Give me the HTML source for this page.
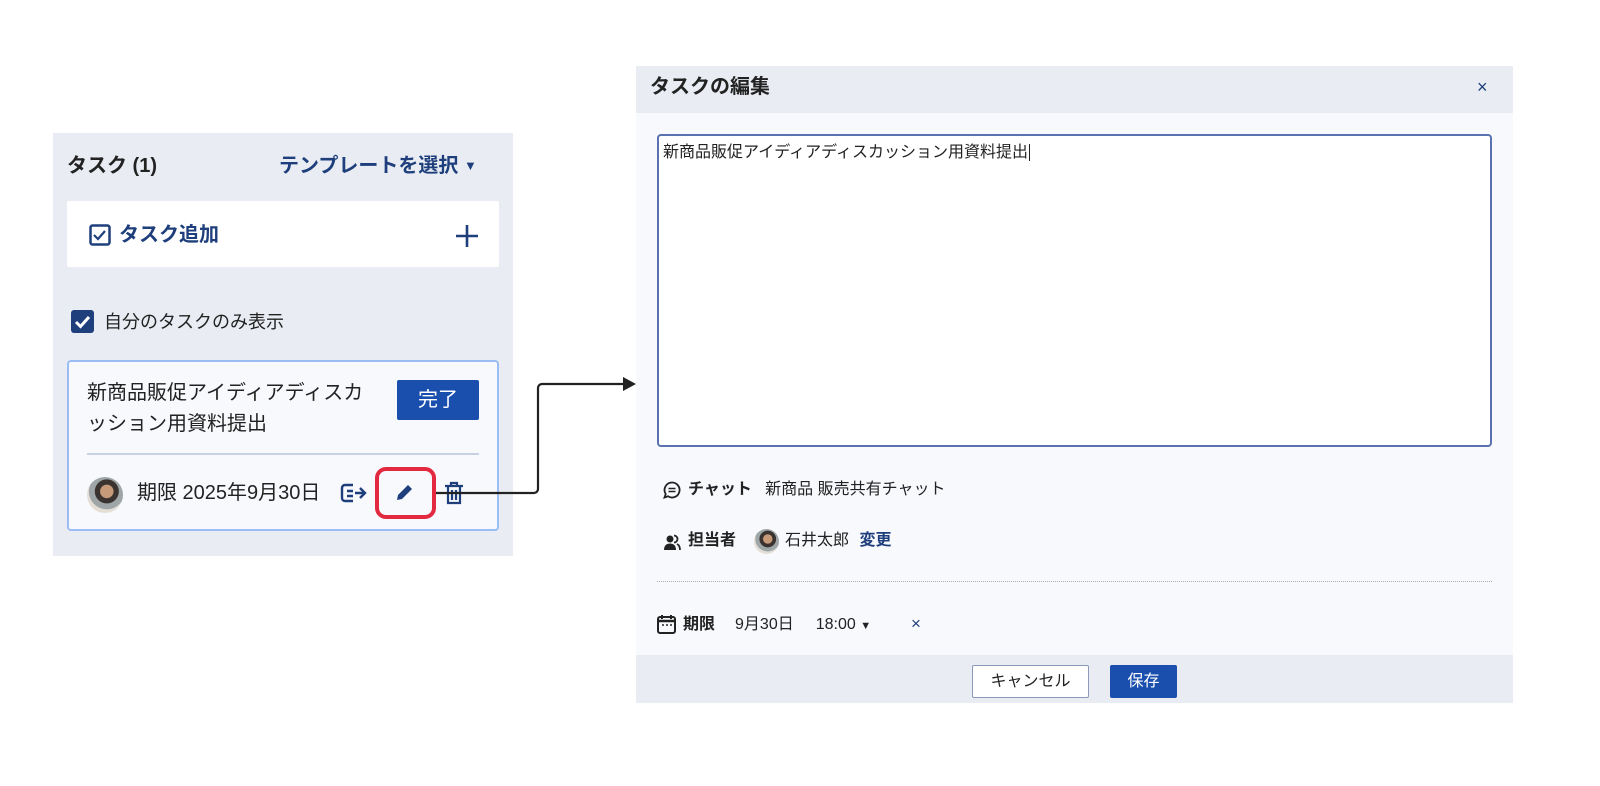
<!DOCTYPE html>
<html><head><meta charset="utf-8"><style>
*{box-sizing:border-box;margin:0;padding:0}
body{width:1600px;height:786px;background:#fff;position:relative;overflow:hidden;font-family:"Liberation Sans","Noto Sans CJK JP",sans-serif;color:#222}
.a{position:absolute;white-space:nowrap}
.blue{color:#1f3f7c}
.av{background:radial-gradient(circle at 55% 40%,#c79a7a 0 22%,#3a3330 24% 40%,#9fa6a8 42% 60%,#e4ded6 62%)}
</style></head><body>
<div class="a" style="left:53px;top:133px;width:460px;height:423px;background:#e9edf3"></div>
<div class="a" style="left:67px;top:152px;font-size:20px;font-weight:bold;line-height:28px">タスク (1)</div>
<div class="a blue" style="left:279px;top:152px;font-size:20px;font-weight:bold;line-height:28px">テンプレートを選択 <span style="font-size:13px;position:relative;top:-2px">▼</span></div>
<div class="a" style="left:67px;top:201px;width:432px;height:66px;background:#fff;border-radius:2px"></div>
<svg class="a" style="left:89px;top:224px" width="22" height="22" viewBox="0 0 22 22"><rect x="1.5" y="1.5" width="19" height="19" rx="2" fill="none" stroke="#1f3f7c" stroke-width="2.5"/><path d="M5 11l4 4 7-8" fill="none" stroke="#1f3f7c" stroke-width="2.2"/></svg>
<div class="a blue" style="left:119px;top:221px;font-size:20px;font-weight:bold;line-height:28px">タスク追加</div>
<svg class="a" style="left:455px;top:224px" width="24" height="24"><path d="M12 1v22M1 12h22" stroke="#1f3f7c" stroke-width="2.6"/></svg>
<svg class="a" style="left:71px;top:310px" width="23" height="23"><rect width="23" height="23" rx="3" fill="#1f3f7c"/><path d="M5 12l4.5 4.5L18 7" fill="none" stroke="#fff" stroke-width="3"/></svg>
<div class="a" style="left:104px;top:309px;font-size:18px;line-height:26px">自分のタスクのみ表示</div>
<div class="a" style="left:67px;top:360px;width:432px;height:171px;background:#f7f9fc;border:2px solid #9bbdf3;border-radius:4px"></div>
<div class="a" style="left:87px;top:378px;font-size:20px;line-height:31px">新商品販促アイディアディスカ<br>ッション用資料提出</div>
<div class="a" style="left:397px;top:380px;width:82px;height:40px;background:#1a4fae;border-radius:2px;color:#fff;font-size:20px;text-align:center;line-height:40px">完了</div>
<div class="a" style="left:87px;top:453px;width:392px;height:2px;background:#c7d3e3"></div>
<div class="a av" style="left:87px;top:477px;width:36px;height:36px;border-radius:50%"></div>
<div class="a" style="left:137px;top:479px;font-size:20px;line-height:28px">期限 2025年9月30日</div>
<svg class="a" style="left:340px;top:482px" width="28" height="22" viewBox="0 0 28 22"><path d="M13 3H5a3 3 0 0 0-3 3v10a3 3 0 0 0 3 3h8" fill="none" stroke="#1f3f7c" stroke-width="2.4"/><path d="M7 9h6M7 14h6M15 11h9M20 6l5 5-5 5" fill="none" stroke="#1f3f7c" stroke-width="2.4"/></svg>
<div class="a" style="left:375px;top:467px;width:61px;height:52px;border:4px solid #e2293f;border-radius:11px"></div>
<svg class="a" style="left:395px;top:482px" width="20" height="20" viewBox="0 0 20 20"><path d="M2 18l1-5 10-10 4 4-10 10z" fill="#1f3f7c"/></svg>
<svg class="a" style="left:444px;top:481px" width="20" height="24" viewBox="0 0 20 24"><path d="M1 5h18M7 5V2h6v3M4 5v17h12V5M8 9v10M12 9v10" fill="none" stroke="#1f3f7c" stroke-width="2.2"/></svg>
<svg class="a" style="left:436px;top:375px" width="202" height="125"><path d="M0 118h98a4 4 0 0 0 4-4V13a4 4 0 0 1 4-4h84" fill="none" stroke="#222" stroke-width="2.2"/><path d="M187 2l13 7-13 7z" fill="#222"/></svg>
<div class="a" style="left:636px;top:66px;width:877px;height:637px;background:#f7f9fc"></div>
<div class="a" style="left:636px;top:66px;width:877px;height:47px;background:#e9edf3"></div>
<div class="a" style="left:650px;top:73px;font-size:20px;font-weight:bold;line-height:28px">タスクの編集</div>
<div class="a blue" style="left:1477px;top:76px;font-size:18px;line-height:22px">×</div>
<div class="a" style="left:657px;top:134px;width:835px;height:313px;background:#fff;border:2px solid #5a73b0;border-radius:4px"></div>
<div class="a" style="left:663px;top:142px;font-size:16px;line-height:22px">新商品販促アイディアディスカッション用資料提出<span style="border-left:1px solid #222;margin-left:1px"></span></div>
<svg class="a" style="left:663px;top:481px" width="18" height="18" viewBox="0 0 18 18"><path d="M9 1.5a7.5 7.5 0 1 1-4 13.8L1.5 16.5l1.2-3.5A7.5 7.5 0 0 1 9 1.5z" fill="none" stroke="#222" stroke-width="1.8"/><path d="M5.5 7.5h7M5.5 10.5h7" stroke="#222" stroke-width="1.6"/></svg>
<div class="a" style="left:688px;top:478px;font-size:16px;line-height:24px"><b>チャット</b>&nbsp;&nbsp; 新商品 販売共有チャット</div>
<svg class="a" style="left:663px;top:533px" width="18" height="18" viewBox="0 0 18 18"><circle cx="7" cy="6" r="3.5" fill="#222"/><path d="M1 17c0-5 3-6.5 6-6.5s6 1.5 6 6.5z" fill="#222"/><path d="M11 2.5a3.5 3.5 0 0 1 0 7M14 11c2 1 3 3 3 6" fill="none" stroke="#222" stroke-width="1.8"/></svg>
<div class="a" style="left:688px;top:529px;font-size:16px;font-weight:bold;line-height:24px">担当者</div>
<div class="a av" style="left:754px;top:529px;width:25px;height:25px;border-radius:50%"></div>
<div class="a" style="left:785px;top:529px;font-size:16px;line-height:24px">石井太郎 <b class="blue" style="margin-left:6px">変更</b></div>
<div class="a" style="left:657px;top:581px;width:835px;border-top:1px dotted #aaa"></div>
<svg class="a" style="left:657px;top:614px" width="19" height="20" viewBox="0 0 19 20"><rect x="1" y="3" width="17" height="16" rx="2" fill="none" stroke="#222" stroke-width="2"/><path d="M1 7h17" stroke="#222" stroke-width="2.5"/><path d="M5 1v4M14 1v4" stroke="#222" stroke-width="2"/><path d="M5 11h2M9 11h2M13 11h2" stroke="#222" stroke-width="1.6"/></svg>
<div class="a" style="left:683px;top:613px;font-size:16px;line-height:24px"><b>期限</b><span style="margin-left:20px">9月30日</span><span style="margin-left:22px">18:00 <span style="font-size:11px">▼</span></span></div>
<div class="a blue" style="left:911px;top:613px;font-size:17px;line-height:22px">×</div>
<div class="a" style="left:636px;top:655px;width:877px;height:48px;background:#e9edf3"></div>
<div class="a" style="left:972px;top:665px;width:117px;height:33px;background:#fff;border:1px solid #8a9ab8;border-radius:2px;font-size:16px;text-align:center;line-height:31px">キャンセル</div>
<div class="a" style="left:1110px;top:665px;width:67px;height:33px;background:#1a4fae;border-radius:2px;color:#fff;font-size:16px;text-align:center;line-height:33px">保存</div>
</body></html>
